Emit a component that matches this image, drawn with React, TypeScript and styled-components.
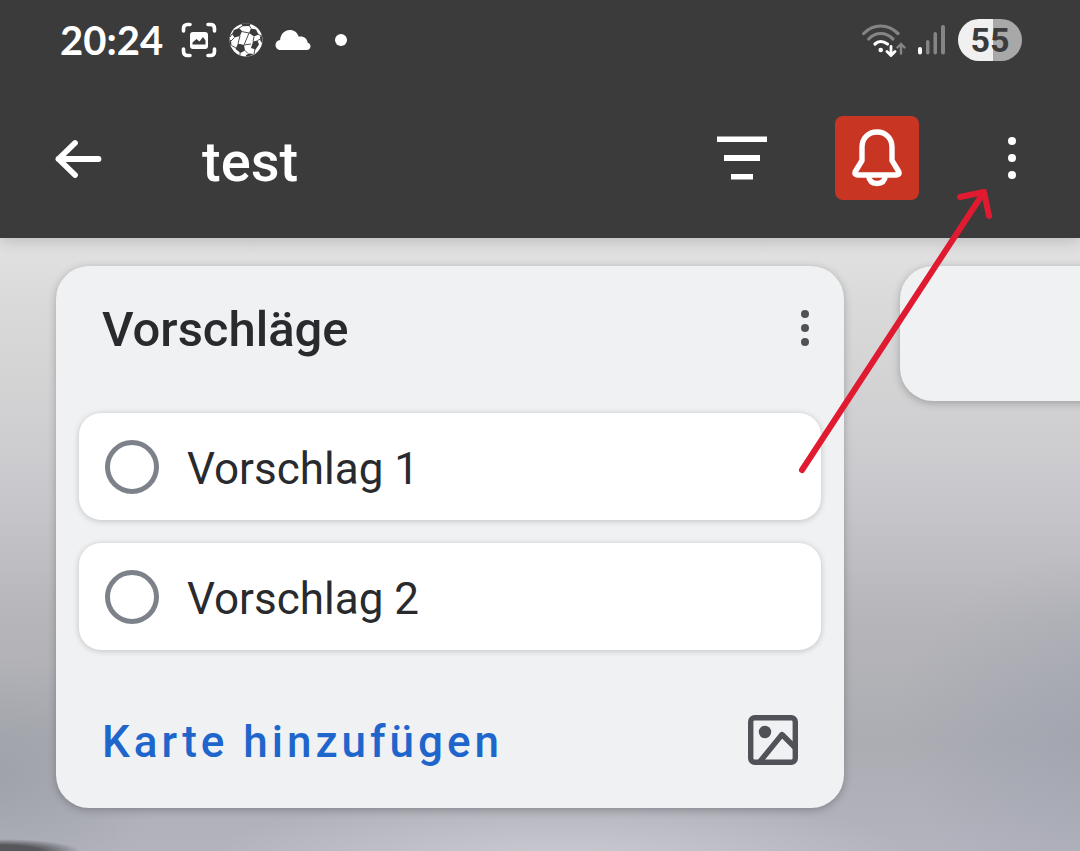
import React from "react";
import styled, { createGlobalStyle } from "styled-components";

const GlobalStyle = createGlobalStyle`
  *, *::before, *::after { box-sizing: border-box; }
  html, body { margin: 0; }
  body {
    font-family: Roboto, "Liberation Sans", sans-serif;
    color: #292a2e;
    background: #b4b5bb;
  }
  button { font: inherit; border: 0; padding: 0; background: none; cursor: pointer; }
  h1, h2, ul { margin: 0; padding: 0; font-weight: 500; }
  svg { display: block; flex: none; }
`;

const Screen = styled.div`
  position: relative;
  display: flex;
  flex-direction: column;
  min-height: 100vh;
  overflow: hidden;
`;

const Header = styled.header`
  position: relative;
  background: #3b3b3b;
  color: #fff;
  box-shadow: 0 2px 16px rgba(0, 0, 0, 0.2);
`;

const StatusBar = styled.div`
  display: flex;
  align-items: center;
  justify-content: space-between;
  height: 80px;
  padding: 0 58px 0 60px;
`;

const StatusGroup = styled.div<{ $gap: number }>`
  display: flex;
  align-items: center;
  gap: ${(p) => p.$gap}px;
`;

const Clock = styled.time`
  font: 700 40px/48px Lato, sans-serif;
  margin-right: 6px;
`;

const MoreNotices = styled.span`
  width: 12px;
  height: 12px;
  margin-left: 12px;
  border-radius: 50%;
  background: #fff;
`;

const Battery = styled.span`
  width: 64px;
  border-radius: 21px;
  background: linear-gradient(90deg, #f0f0f0 55%, #a8a8a8 55%);
  color: #3b3b3b;
  font-size: 34px;
  font-weight: 700;
  line-height: 42px;
  text-align: center;
`;

const AppBar = styled.div`
  display: flex;
  align-items: center;
  height: 158px;
  padding: 0 26px 2px 36px;
`;

const IconButton = styled.button<{ $alert?: boolean }>`
  display: grid;
  place-items: center;
  flex: none;
  width: 84px;
  height: 84px;
  border-radius: 8px;
  color: inherit;
  background: ${(p) => (p.$alert ? "#c83522" : "none")};
`;

const BoardTitle = styled.h1`
  flex: 1;
  padding: 7px 0 0 82px;
  font-size: 56px;
  line-height: 64px;
`;

const Actions = styled.div`
  display: flex;
  gap: 51px;
`;

const Board = styled.main`
  flex: 1;
  display: flex;
  align-items: flex-start;
  gap: 56px;
  padding: 28px 56px 43px;
  background:
    radial-gradient(ellipse 80px 12px at 0 100%, #55575a 50%, transparent 100%),
    radial-gradient(ellipse 360px 70px at 52% 102%, #cbcbd2, transparent 100%),
    radial-gradient(ellipse 220px 180px at 103% 80%, rgba(150, 155, 172, 0.5), transparent 100%),
    radial-gradient(ellipse 160px 120px at 0 88%, rgba(145, 150, 160, 0.5), transparent 100%),
    linear-gradient(180deg, #e2e2e2 0, #d9d9d9 12%, #d0d0d2 30%, #c8c7cc 42%, #b6b6ba 62%, #acadb3 82%, #b2b3bd 100%);
`;

const List = styled.section`
  flex: none;
  width: min(788px, calc(100vw - 112px));
  min-height: 135px;
  border-radius: 33px;
  background: #eff1f3;
  box-shadow: 0 2px 8px rgba(0, 0, 0, 0.25);
`;

const ListHeader = styled.div`
  display: flex;
  align-items: center;
  justify-content: space-between;
  height: 124px;
  padding: 0 18px 0 46px;
`;

const ListTitle = styled.h2`
  padding-top: 4px;
  font-size: 49px;
  line-height: 60px;
`;

const SmallButton = styled(IconButton)`
  width: 42px;
  height: 60px;
  color: #505258;
`;

const Cards = styled.ul`
  display: flex;
  flex-direction: column;
  gap: 23px;
  padding: 23px 23px 0;
  list-style: none;
  font-weight: 400;
`;

const Card = styled.li`
  border-radius: 22px;
  background: #fff;
  box-shadow: 0 1px 6px rgba(0, 0, 0, 0.2);
`;

const CardLabel = styled.label`
  display: flex;
  align-items: center;
  gap: 28px;
  height: 107px;
  padding: 0 26px;
  font-size: 44px;
  line-height: 52px;
`;

const CardName = styled.span`
  padding-top: 4px;
`;

const DoneToggle = styled.input`
  appearance: none;
  flex: none;
  width: 54px;
  height: 54px;
  margin: 0;
  border: 5px solid #7d818a;
  border-radius: 50%;
  &:checked { background: #7d818a; }
`;

const ListFooter = styled.div`
  display: flex;
  align-items: center;
  justify-content: space-between;
  height: 158px;
  padding: 22px 46px 0;
`;

const AddCard = styled.button`
  padding-top: 4px;
  color: #1f66cc;
  font-size: 44px;
  font-weight: 500;
  line-height: 52px;
  letter-spacing: 4px;
`;

const ImageButton = styled(IconButton)`
  width: 50px;
  height: 50px;
  color: #505258;
`;

const Pointer = styled.svg`
  position: absolute;
  top: 180px;
  right: 80px;
  overflow: visible;
  pointer-events: none;
`;

const ScreenshotIcon = () => (
  <svg width="36" height="36" viewBox="0 0 36 36" fill="none" stroke="#fff" strokeWidth="3.600" strokeLinecap="round" aria-hidden>
    <path d="M2.500 9V6.500Q2.500 2.500 6.500 2.500H9M27 2.500h2.500q4 0 4 4V9M33.500 27v2.500q0 4-4 4H27M9 33.500H6.500q-4 0-4-4V27" />
    <rect x="9" y="10" width="18" height="17" rx="3" fill="#fff" stroke="none" />
    <path d="M11.500 22.500v-2l4-3.500 3 2.500 3.500-4.500 2.500 3.500v4z" fill="#3b3b3b" stroke="none" />
  </svg>
);

const BallIcon = () => (
  <svg width="34" height="34" viewBox="0 0 34 34" aria-hidden>
    <circle cx="17" cy="17" r="16.500" fill="#fff" />
    <g fill="#3b3b3b">
      <path d="M12.500 1.200Q17 -.500 21.500 1.200L20.500 3 13.500 3.300z" />
      <path d="M5 7l5-2 3 3-2 5-5.500 1.500L3 11z" />
      <path d="M22 5.500l5 1 2.500 5-4.500 2-5-3.500z" />
      <path d="M9 20.500l6 1.500 1 5.500-4.500 2.500-5-4z" />
      <path d="M24 18.500l4.500-1 1.500 4-3.500 5-4.500-1.500z" />
      <path d="M.600 16l1.400 1.500.500 5-.800.500Q.300 19.500.600 16z" />
      <path d="M32.500 12l1 5-.500 3-1.500-2-.500-4z" />
      <path d="M17 32l3-1.500 5 .500Q21 33.700 17 33.400z" />
    </g>
    <path d="M10 5l3.500-2M20.500 3L22 5.500M12.500 8.500L20 10M11 13l-2 7.500M20 10l-5 12M5.500 14.500L2 18M2.500 22.500L7 25M25 13.500l-1 5M29 11l3 2M28.500 17.500l3-1.500M15 22l7-1M16 27.500l3 3M26 26l-1 5M11 29.500v2.500M3 11L1 14" fill="none" stroke="#3b3b3b" strokeWidth=".9" />
  </svg>
);

const CloudIcon = () => (
  <svg width="36" height="22" viewBox="0 0 36 22" fill="#fff" aria-hidden>
    <path d="M5.500 21C2.500 21 .500 18.800.500 16c0-2.800 2-4.800 4.600-5.100C5.600 5.200 9.500 1 14.800 1c4.300 0 7.700 2.700 8.900 6.700 5-.900 8.600 2 9 6 1.700.500 2.800 1.800 2.800 3.600 0 2.200-1.600 3.700-3.800 3.700z" />
  </svg>
);

const WifiIcon = () => (
  <svg width="44" height="34" viewBox="0 0 44 34" fill="none" strokeWidth="3.200" strokeLinecap="round" aria-hidden>
    <g stroke="#858585">
      <path d="M1.700 10.500Q9 3 18.700 3T36 10.500" />
      <path d="M6.700 16Q12 10.500 18.700 10.500T31 16" />
      <path d="M39 30.500V21M35.500 24.500l3.500-3.500 3.500 3.500" strokeWidth="2.400" />
    </g>
    <g stroke="#fff">
      <path d="M13 21Q15.500 18.500 18.700 18.500T25.500 21" />
      <path d="M29 23.500v8M25 28.500l4 4 4-4" strokeWidth="2.800" />
    </g>
    <circle cx="18.700" cy="27" r="2.300" fill="#fff" />
  </svg>
);

const SignalIcon = () => (
  <svg width="28" height="30" viewBox="0 0 28 30" fill="#858585" aria-hidden>
    <rect x="0" y="22" width="4" height="7.500" rx="2" fill="#fff" />
    <rect x="8" y="15" width="3.500" height="14.500" rx="1.700" />
    <rect x="15.500" y="7" width="3.500" height="22.500" rx="1.700" />
    <rect x="23" y="0" width="4" height="29.500" rx="2" />
  </svg>
);

const BackIcon = () => (
  <svg width="48" height="40" viewBox="0 0 48 40" fill="none" stroke="#fff" strokeWidth="5.800" strokeLinecap="round" strokeLinejoin="round" aria-hidden>
    <path d="M44.500 21H4.500M21 5L4.500 21 21 37" />
  </svg>
);

const FilterIcon = () => (
  <svg width="50" height="44" viewBox="0 0 50 44" fill="#fff" aria-hidden>
    <path d="M0 .500h50v5.500H0zM7 19h36v6H7zM14 38h22v5.500H14z" />
  </svg>
);

const BellIcon = () => (
  <svg width="50" height="58" viewBox="0 0 50 58" fill="none" stroke="#fff" strokeWidth="5.400" strokeLinejoin="round" aria-hidden>
    <path d="M25 3C16 3 10 9.500 10 18v13.500L3.300 42.500Q2 46 5.500 46h39Q48 46 46.700 42.500L40 31.500V18C40 9.500 34 3 25 3z" />
    <path d="M16.500 46.500Q17.500 54.500 25 54.500T33.500 46.500" />
  </svg>
);

const MoreIcon = ({ radius, step }: { radius: number; step: number }) => (
  <svg width="12" height="48" viewBox="0 0 12 48" fill="currentColor" aria-hidden>
    <circle cx="6" cy={24 - step} r={radius} />
    <circle cx="6" cy="24" r={radius} />
    <circle cx="6" cy={24 + step} r={radius} />
  </svg>
);

const ImageIcon = () => (
  <svg width="50" height="50" viewBox="0 0 50 50" fill="none" stroke="currentColor" strokeWidth="5.400" aria-hidden>
    <rect x="2.700" y="2.700" width="44.600" height="44.600" rx="4" />
    <circle cx="17" cy="17" r="6.200" fill="currentColor" stroke="none" />
    <path d="M12 46.500L34 19.500 47 32.500" strokeLinejoin="round" />
  </svg>
);

const cards = ["Vorschlag 1", "Vorschlag 2"];

export default function App() {
  return (
    <Screen>
      <GlobalStyle />
      <Header>
        <StatusBar>
          <StatusGroup $gap={12}>
            <Clock>20:24</Clock>
            <ScreenshotIcon />
            <BallIcon />
            <CloudIcon />
            <MoreNotices />
          </StatusGroup>
          <StatusGroup $gap={12}>
            <WifiIcon />
            <SignalIcon />
            <Battery>55</Battery>
          </StatusGroup>
        </StatusBar>
        <AppBar>
          <IconButton aria-label="Zurück"><BackIcon /></IconButton>
          <BoardTitle>test</BoardTitle>
          <Actions>
            <IconButton aria-label="Filter"><FilterIcon /></IconButton>
            <IconButton $alert aria-label="Benachrichtigungen"><BellIcon /></IconButton>
            <IconButton aria-label="Mehr"><MoreIcon radius={4} step={17} /></IconButton>
          </Actions>
        </AppBar>
      </Header>
      <Board>
        <List>
          <ListHeader>
            <ListTitle>Vorschläge</ListTitle>
            <SmallButton aria-label="Listenmenü"><MoreIcon radius={4} step={14} /></SmallButton>
          </ListHeader>
          <Cards>
            {cards.map((name) => (
              <Card key={name}>
                <CardLabel>
                  <DoneToggle type="checkbox" />
                  <CardName>{name}</CardName>
                </CardLabel>
              </Card>
            ))}
          </Cards>
          <ListFooter>
            <AddCard>Karte hinzufügen</AddCard>
            <ImageButton aria-label="Bild hinzufügen"><ImageIcon /></ImageButton>
          </ListFooter>
        </List>
        <List aria-label="Weitere Liste" />
      </Board>
      <Pointer width="200" height="300" viewBox="0 0 200 300" fill="none" stroke="#e01b31" strokeWidth="6" strokeLinecap="round" strokeLinejoin="round" aria-hidden>
        <path d="M2 290L184 12M160 17l24-5 5 24" />
      </Pointer>
    </Screen>
  );
}
